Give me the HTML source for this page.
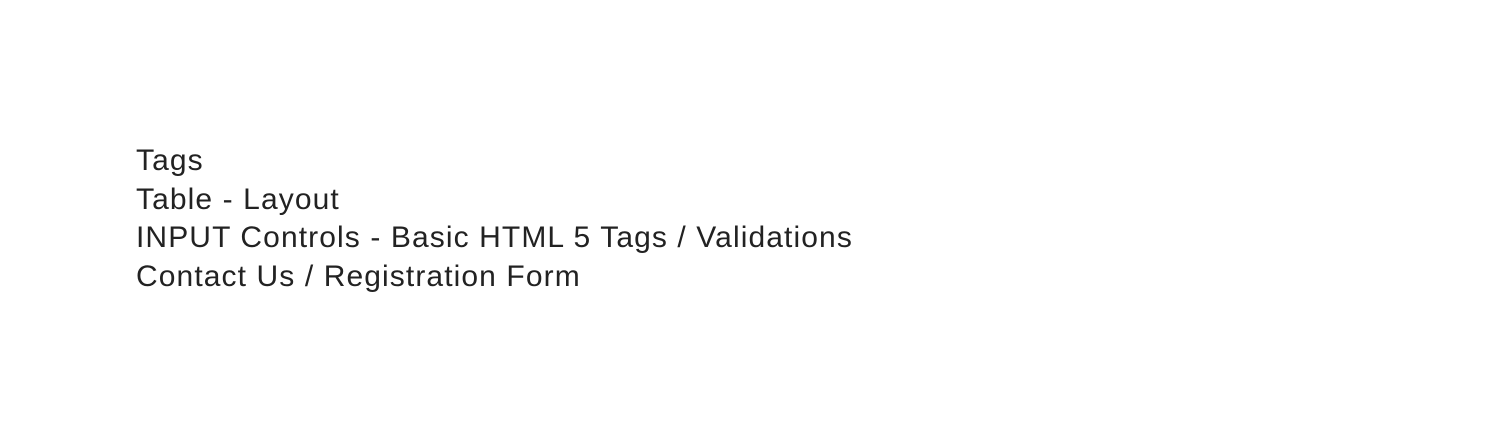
<!DOCTYPE html>
<html>
<head>
<meta charset="utf-8">
<style>
  html, body { margin: 0; padding: 0; background: #fff; }
  body { width: 1489px; height: 426px; overflow: hidden; }
  .list {
    position: absolute;
    left: 136px;
    top: 142px;
    font-family: "Liberation Sans", Arial, sans-serif;
    font-size: 30px;
    letter-spacing: 1.1px;
    line-height: 38.5px;
    color: #222;
  }
  .list div { white-space: nowrap; }
</style>
</head>
<body>
  <div class="list">
    <div>Tags</div>
    <div>Table - Layout</div>
    <div>INPUT Controls - Basic HTML 5 Tags / Validations</div>
    <div>Contact Us / Registration Form</div>
  </div>
</body>
</html>
